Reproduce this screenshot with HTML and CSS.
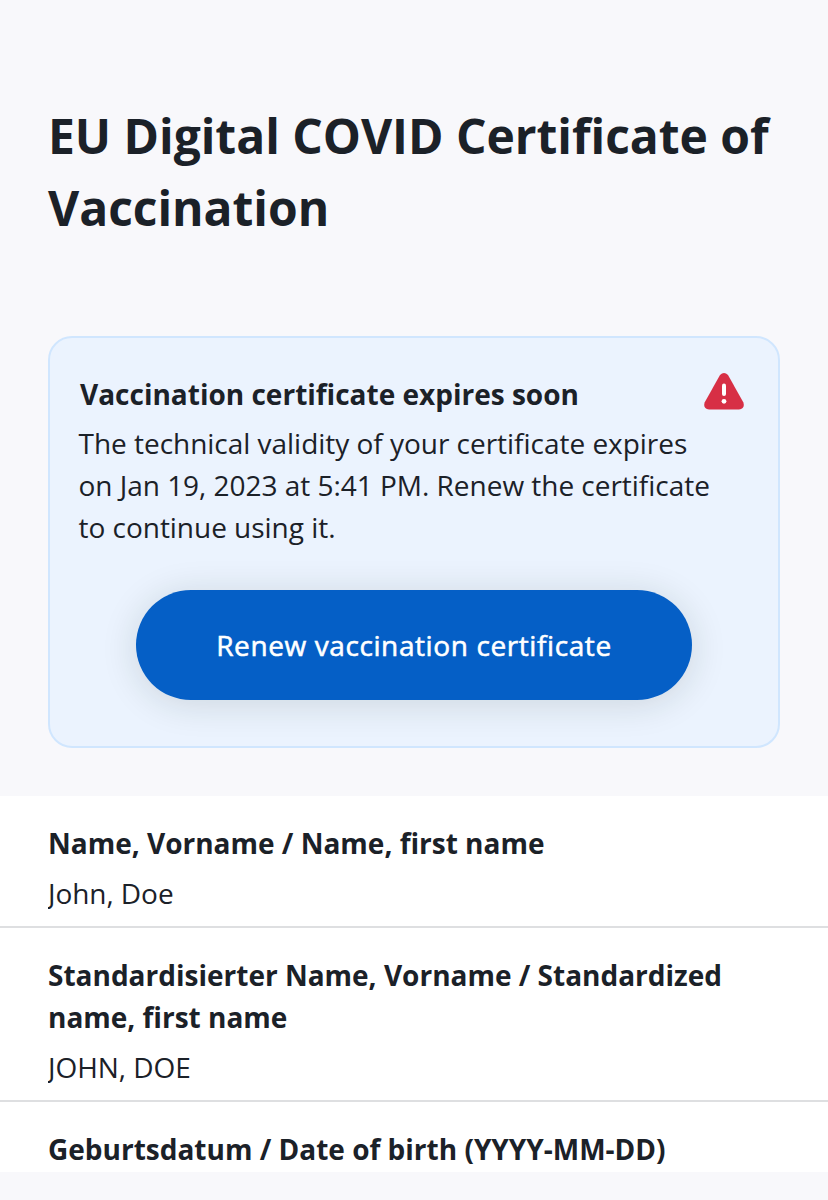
FILE: index.html
```html
<!DOCTYPE html>
<html lang="en">
<head>
<meta charset="utf-8">
<title>EU Digital COVID Certificate of Vaccination</title>
<link rel="stylesheet" href="styles.css">
</head>
<body>
<main class="page">
  <header class="heading">
    <h1 class="title">EU Digital COVID Certificate of<br>Vaccination</h1>
  </header>
  <section class="notice">
    <div class="notice-head">
      <h2 class="notice-title">Vaccination certificate expires soon</h2>
      <svg class="warning" viewBox="0 0 40 38" aria-hidden="true">
        <path d="M16 3.1Q20-1.1 24 3.1L39.4 30.5Q41.2 37 35 37.4H5Q-1.2 37 .6 30.5Z" fill="#d72f45"/>
        <path d="M20 13.4V22" stroke="#fff" stroke-width="4" stroke-linecap="round"/>
        <circle cx="20" cy="29.3" r="2.4" fill="#fff"/>
      </svg>
    </div>
    <p class="notice-text">The technical validity of your certificate expires<br>on Jan 19, 2023 at 5:41 PM. Renew the certificate<br>to continue using it.</p>
    <button class="renew">Renew vaccination certificate</button>
  </section>
  <dl class="details">
    <div class="row"><dt>Name, Vorname / Name, first name</dt><dd>John, Doe</dd></div>
    <div class="row"><dt>Standardisierter Name, Vorname / Standardized<br>name, first name</dt><dd>JOHN, DOE</dd></div>
    <div class="row"><dt>Geburtsdatum / Date of birth (YYYY-MM-DD)</dt></div>
  </dl>
</main>
</body>
</html>
```
FILE: styles.css
```css
* { box-sizing: border-box; margin: 0; padding: 0; }
body {
  background: #f8f8fb;
  color: #1b2128;
  font: 28px/42px "Open Sans", sans-serif;
}
.page { height: 1200px; overflow: hidden; }
.heading { height: 336px; padding: 100px 48px 0; }
.title {
  font-size: 48px;
  line-height: 72px;
  font-weight: 700;
  letter-spacing: -.03px;
  white-space: nowrap;
}
.notice {
  height: 412px;
  margin: 0 48px;
  padding: 34px 34px 0 28.5px;
  border: 2px solid #d0e6fe;
  border-radius: 24px;
  background: #ebf3fe;
  white-space: nowrap;
}
.notice-head { display: flex; justify-content: space-between; height: 50px; }
.notice-title { font-size: 28px; line-height: 42px; font-weight: 700; padding: 1px 0 0 1.5px; }
.notice-text { letter-spacing: -.025px; }
.warning { width: 40px; height: 38px; }
.renew {
  display: block;
  width: 556px;
  height: 110px;
  margin: 42px 0 0 57.5px;
  border: 0;
  border-radius: 55px;
  background: #055fc6;
  box-shadow: 0 4px 36px rgba(20, 45, 30, .14);
  color: #fff;
  font: 400 28px/42px "Open Sans", sans-serif;
  letter-spacing: .6px;
  -webkit-text-stroke: .55px #fff;
}
.details {
  height: 376px;
  margin-top: 48px;
  background: #fff;
  overflow: hidden;
  white-space: nowrap;
}
.row { padding: 26px 48px 12px; border-bottom: 2px solid #dedfe1; }
.row dt { font-weight: 700; }
.row dd { margin-top: 8px; overflow: hidden; letter-spacing: -.06px; }
```
